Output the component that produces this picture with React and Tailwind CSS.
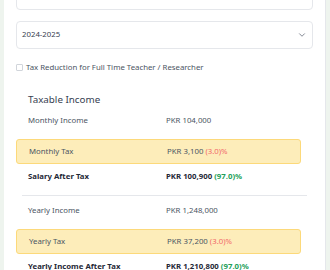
import { ChevronDown } from 'lucide-react';

const monthly = [
  { type: 'plain', label: 'Monthly Income', value: 'PKR 104,000' },
  { type: 'tax', label: 'Monthly Tax', value: 'PKR 3,100', pct: '(3.0)%' },
  { type: 'bold', label: 'Salary After Tax', value: 'PKR 100,900', pct: '(97.0)%' },
];

const yearly = [
  { type: 'plain', label: 'Yearly Income', value: 'PKR 1,248,000' },
  { type: 'tax', label: 'Yearly Tax', value: 'PKR 37,200', pct: '(3.0)%' },
  { type: 'bold', label: 'Yearly Income After Tax', value: 'PKR 1,210,800', pct: '(97.0)%' },
];

function Row({ row }) {
  if (row.type === 'tax') {
    return (
      <div className="mr-3 mt-[8px] grid h-[25px] grid-cols-[138px_1fr] items-center rounded-[3px] border border-[#fcd97a] bg-[#fdedba] pl-3 text-[7.8px] text-[#4b5563]">
        <span>{row.label}</span>
        <span>
          {row.value} <span className="text-[#f26b6b]">{row.pct}</span>
        </span>
      </div>
    );
  }
  if (row.type === 'bold') {
    return (
      <div className="mt-[3px] grid h-5 grid-cols-[138px_1fr] items-center pl-3 text-[7.8px] font-bold text-[#1f2937]">
        <span>{row.label}</span>
        <span>
          {row.value} <span className="text-[#22a05a]">{row.pct}</span>
        </span>
      </div>
    );
  }
  return (
    <div className="grid h-5 grid-cols-[138px_1fr] items-center pl-3 text-[7.8px] text-[#4b5563]">
      <span>{row.label}</span>
      <span>{row.value}</span>
    </div>
  );
}

function App() {
  return (
    <div className="h-screen overflow-hidden bg-[#eef4ee] px-1 font-['Noto_Sans',sans-serif]">
      <div className="flow-root h-full border-r border-[#e5e7eb] bg-white px-3">
        <div className="-mt-[18px] flex h-7 items-center rounded border border-[#e5e7eb] px-[5px] text-[7.8px] text-[#9ca3af]">
          104000
        </div>
        <div className="mt-[11px] flex h-7 items-center justify-between rounded border border-[#e5e7eb] px-[5px] text-[7.8px] text-[#374151]">
          <span>2024-2025</span>
          <ChevronDown className="h-2.5 w-2.5 text-[#6b7280]" strokeWidth={2} />
        </div>
        <label className="mt-[13px] flex h-[11px] items-center gap-[3px] text-[7.8px] text-[#4b5563]">
          <span className="h-[7px] w-[7px] rounded-[1px] border border-[#d1d5db] bg-white" />
          Tax Reduction for Full Time Teacher / Researcher
        </label>

        <div className="mt-[18px] flex h-[18px] items-center pl-3 text-[9.8px] text-[#374151]">Taxable Income</div>
        <div className="mt-[2px]">
          {monthly.map((r) => (
            <Row key={r.label} row={r} />
          ))}
        </div>
        <div className="mx-[6px] mt-2 border-t border-[#e5e7eb]" />
        <div className="mt-[5px]">
          {yearly.map((r) => (
            <Row key={r.label} row={r} />
          ))}
        </div>
      </div>
    </div>
  );
}

export default App;
